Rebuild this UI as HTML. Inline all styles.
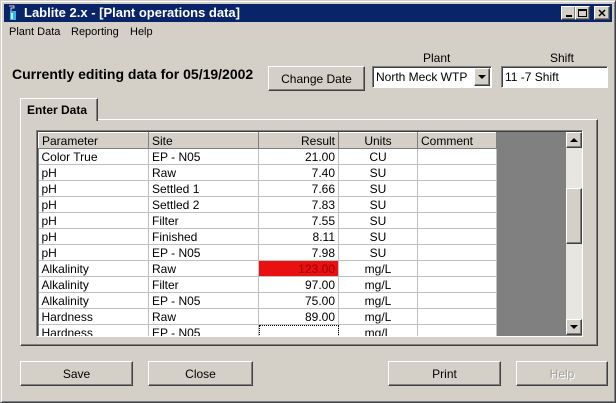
<!DOCTYPE html>
<html><head><meta charset="utf-8"><style>
*{box-sizing:border-box;margin:0;padding:0}
body{width:616px;height:403px;background:#d4d0c8;font-family:"Liberation Sans",sans-serif;font-size:11px;color:#000;position:relative;overflow:hidden}
.a{position:absolute}
.raised{border:1px solid;border-color:#fff #404040 #404040 #fff;box-shadow:inset -1px -1px #808080;background:#d4d0c8}
.sunk{border:1px solid;border-color:#808080 #fff #fff #808080;box-shadow:inset 1px 1px #404040;background:#fff}
.btn{display:flex;align-items:center;justify-content:center;font-size:12px}
table{border-collapse:collapse;table-layout:fixed}
td{height:16px;border-right:1px solid #c0c0c0;border-bottom:1px solid #c0c0c0;padding:0 3px;font-size:12px;white-space:nowrap;overflow:hidden;background:#fff}
th{height:16px;font-weight:normal;font-size:12px;text-align:left;padding:0 3px;background:#d4d0c8;border:1px solid;border-color:#fff #808080 #808080 #fff}
.r{text-align:right}.c{text-align:center}
</style></head><body>
<div class="a" style="left:0;top:0;width:616px;height:403px;border:1px solid;border-color:#d4d0c8 #404040 #404040 #d4d0c8;box-shadow:inset 1px 1px #fff,inset -1px -1px #808080"></div>
<div class="a" style="left:4px;top:4px;width:608px;height:18px;background:#0a246a"></div>
<svg class="a" style="left:6px;top:5px" width="14" height="16"><path d="M3 1h5v2H5v3" stroke="#ccc" fill="none"/><rect x="4" y="6" width="6" height="9" fill="#3ab0e0"/><rect x="5" y="8" width="2" height="6" fill="#bef"/></svg>
<div class="a" style="left:24px;top:5px;color:#fff;font-weight:bold;font-size:13px">Lablite 2.x - [Plant operations data]</div>
<div class="a raised btn" style="left:561px;top:6px;width:15px;height:14px"><div style="width:6px;height:2px;background:#000;margin-top:6px"></div></div>
<div class="a raised btn" style="left:575px;top:6px;width:15px;height:14px"><div style="width:9px;height:8px;border:1px solid #000;border-top-width:2px"></div></div>
<div class="a raised btn" style="left:594px;top:6px;width:16px;height:14px;font-weight:bold;font-size:11px">✕</div>
<div class="a" style="left:9px;top:26px;font-size:11px">Plant Data</div>
<div class="a" style="left:71px;top:26px;font-size:11px">Reporting</div>
<div class="a" style="left:130px;top:26px;font-size:11px">Help</div>
<div class="a" style="left:12px;top:66px;font-weight:bold;font-size:14px">Currently editing data for 05/19/2002</div>
<div class="a raised btn" style="left:268px;top:66px;width:97px;height:25px">Change Date</div>
<div class="a" style="left:423px;top:51px;font-size:12px">Plant</div>
<div class="a" style="left:550px;top:51px;font-size:12px">Shift</div>
<div class="a sunk" style="left:372px;top:66px;width:120px;height:22px;font-size:12px;padding:3px 0 0 3px">North Meck WTP</div>
<div class="a raised" style="left:474px;top:68px;width:16px;height:18px"><div style="margin:6px 0 0 3px;width:0;height:0;border:4px solid transparent;border-top:4px solid #000"></div></div>
<div class="a sunk" style="left:501px;top:66px;width:107px;height:22px;font-size:12px;padding:3px 0 0 3px">11 -7 Shift</div>
<div class="a" style="left:20px;top:119px;width:578px;height:227px;border:1px solid;border-color:#fff #404040 #404040 #fff;box-shadow:inset -1px -1px #808080"></div>
<div class="a" style="left:20px;top:98px;width:78px;height:23px;border:1px solid;border-color:#fff #404040 transparent #fff;border-bottom:none;box-shadow:inset -1px 0 #808080;background:#d4d0c8;font-weight:bold;font-size:12px;padding:4px 0 0 6px">Enter Data</div>
<div class="a" style="left:36px;top:130px;width:547px;height:207px;border:1px solid;border-color:#808080 #fff #fff #808080;box-shadow:inset 1px 1px #404040;background:#808080;overflow:hidden">
<table style="position:absolute;left:1px;top:1px;width:458px">
<colgroup><col style="width:110px"><col style="width:110px"><col style="width:80px"><col style="width:79px"><col style="width:79px"></colgroup>
<tr><th>Parameter</th><th>Site</th><th class="r">Result</th><th class="c">Units</th><th>Comment</th></tr>
<tr><td>Color True</td><td>EP - N05</td><td class="r">21.00</td><td class="c">CU</td><td></td></tr>
<tr><td>pH</td><td>Raw</td><td class="r">7.40</td><td class="c">SU</td><td></td></tr>
<tr><td>pH</td><td>Settled 1</td><td class="r">7.66</td><td class="c">SU</td><td></td></tr>
<tr><td>pH</td><td>Settled 2</td><td class="r">7.83</td><td class="c">SU</td><td></td></tr>
<tr><td>pH</td><td>Filter</td><td class="r">7.55</td><td class="c">SU</td><td></td></tr>
<tr><td>pH</td><td>Finished</td><td class="r">8.11</td><td class="c">SU</td><td></td></tr>
<tr><td>pH</td><td>EP - N05</td><td class="r">7.98</td><td class="c">SU</td><td></td></tr>
<tr><td>Alkalinity</td><td>Raw</td><td class="r" style="background:#e81010;color:#900">123.00</td><td class="c">mg/L</td><td></td></tr>
<tr><td>Alkalinity</td><td>Filter</td><td class="r">97.00</td><td class="c">mg/L</td><td></td></tr>
<tr><td>Alkalinity</td><td>EP - N05</td><td class="r">75.00</td><td class="c">mg/L</td><td></td></tr>
<tr><td>Hardness</td><td>Raw</td><td class="r">89.00</td><td class="c">mg/L</td><td></td></tr>
<tr><td>Hardness</td><td>EP - N05</td><td class="r" style="outline:1px dotted #000;outline-offset:-1px"></td><td class="c">mg/L</td><td></td></tr>
</table>
<div style="position:absolute;left:529px;top:1px;width:16px;height:203px;background:#e8e6e0"></div>
<div class="raised" style="position:absolute;left:529px;top:1px;width:16px;height:16px"><div style="margin:5px 0 0 3px;width:0;height:0;border:4px solid transparent;border-bottom:4px solid #000;border-top:none"></div></div>
<div class="raised" style="position:absolute;left:529px;top:57px;width:16px;height:56px"></div>
<div class="raised" style="position:absolute;left:529px;top:188px;width:16px;height:16px"><div style="margin:5px 0 0 3px;width:0;height:0;border:4px solid transparent;border-top:4px solid #000;border-bottom:none"></div></div>
</div>
<div class="a raised btn" style="left:20px;top:361px;width:113px;height:25px">Save</div>
<div class="a raised btn" style="left:148px;top:361px;width:105px;height:25px">Close</div>
<div class="a raised btn" style="left:388px;top:361px;width:113px;height:25px">Print</div>
<div class="a raised btn" style="left:516px;top:361px;width:92px;height:25px;color:#a0a0a0;text-shadow:1px 1px #fff">Help</div>
</body></html>
